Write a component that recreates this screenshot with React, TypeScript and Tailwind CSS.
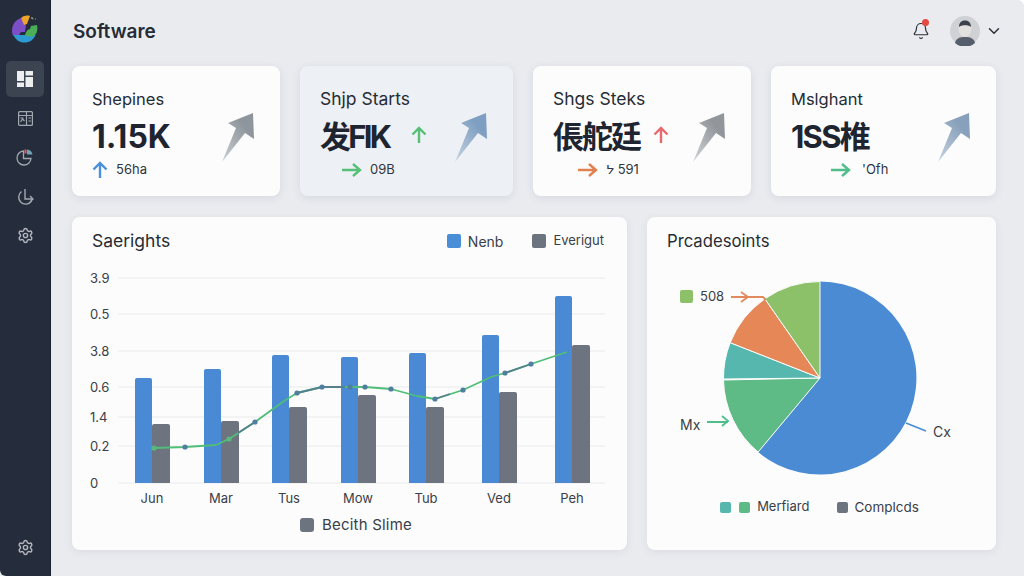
import { Bell, ChevronDown, Settings } from "lucide-react";

const cards = [
  { title: "Shepines", titleSize: "text-[16.5px]", value: "1.15K", valueClass: "text-[32px]", valueGap: "gap-[14px]", bg: "bg-[#fcfcfd]", w: "w-[208px]", from: "#8f959c", to: "#c9ced3", subPad: "pl-0", subGap: "gap-2", sub: "56ha", subColor: "#4a90dc", subDir: "up", mini: "" },
  { title: "Shjp Starts", titleSize: "text-[17.5px]", value: "发FIK", valueClass: "text-[31px] tracking-[-2.75px]", valueGap: "gap-[22px]", bg: "bg-[#edf0f4]", w: "w-[213px]", from: "#7f9fc2", to: "#c5d2e0", subPad: "pl-[22px]", subGap: "gap-2", sub: "09B", subColor: "#56bf78", subDir: "right", mini: "#56bf78" },
  { title: "Shgs Steks", titleSize: "text-[17.5px]", value: "倀舵廷", valueClass: "text-[31px] tracking-[-2px]", valueGap: "gap-[13px]", bg: "bg-[#fcfcfd]", w: "w-[218px]", from: "#92969b", to: "#d0d2d6", subPad: "pl-[25px]", subGap: "gap-2", sub: "ᔭ 591", subColor: "#e0814f", subDir: "right", mini: "#e86a6e" },
  { title: "Mslghant", titleSize: "text-[16.5px]", value: "1SS椎", valueClass: "text-[31px] tracking-[-1.75px]", valueGap: "gap-[14px]", bg: "bg-[#fcfcfd]", w: "w-[225px]", from: "#87a0bb", to: "#c6d2de", subPad: "pl-[40px]", subGap: "gap-[11px]", sub: "'Ofh", subColor: "#4fbe8a", subDir: "right", mini: "" },
];

const bars = [
  { label: "Jun", x: 135, blue: 378, grey: 424 },
  { label: "Mar", x: 204, blue: 369, grey: 421 },
  { label: "Tus", x: 272, blue: 355, grey: 407 },
  { label: "Mow", x: 341, blue: 357, grey: 395 },
  { label: "Tub", x: 409, blue: 353, grey: 407 },
  { label: "Ved", x: 482, blue: 335, grey: 392 },
  { label: "Peh", x: 555, blue: 296, grey: 345 },
];

const yAxis = [
  { label: "3.9", y: 278 },
  { label: "0.5", y: 314 },
  { label: "3.8", y: 351 },
  { label: "0.6", y: 387 },
  { label: "1.4", y: 417 },
  { label: "0.2", y: 446 },
  { label: "0", y: 483 },
];

const dots = [
  [154, 448], [185, 447], [229, 439], [255, 422], [297, 393], [322, 387], [350, 387], [365, 387], [391, 389], [435, 399], [463, 390], [505, 373], [531, 364],
];

function BigArrow({ id, from, to }: { id: string; from: string; to: string }) {
  return (
    <svg width="34" height="50" viewBox="0 0 34 50" className="shrink-0 mt-[47px]">
      <defs>
        <linearGradient id={id} x1="0.9" y1="0" x2="0.05" y2="1">
          <stop offset="0.25" stopColor={from} />
          <stop offset="1" stopColor={to} />
        </linearGradient>
      </defs>
      <path d="M32 0 L33 26 L24 20 L1 49 L15 15 L7 10 Z" fill={`url(#${id})`} />
    </svg>
  );
}

function SmallArrow({ color, dir }: { color: string; dir: string }) {
  if (dir === "up") {
    return (
      <svg width="16" height="17" viewBox="0 0 16 17" fill="none" stroke={color} strokeWidth="2.4" className="shrink-0">
        <path d="M8 17V2M1.5 8.5L8 2l6.5 6.5" />
      </svg>
    );
  }
  return (
    <svg width="20" height="16" viewBox="0 0 20 16" fill="none" stroke={color} strokeWidth="2.4" className="shrink-0">
      <path d="M0 8h18M11 2l7 6-7 6" />
    </svg>
  );
}

function Logo() {
  return (
    <svg width="26" height="28" viewBox="0 0 26 28">
      <path d="M9 3C3 5 0 10 0 16c0 2 .5 4 1.500 5H12l2-10z" fill="#7c4fc6" />
      <path d="M9 3c3-2.500 6-3 9-2l-3 8-3 1z" fill="#f0a32c" />
      <path d="M1.500 20c2 5 6 7.500 11 7.500 5 0 9-2.500 11-7.500z" fill="#2e9ad2" />
      <path d="M9 17h8l-2 3H7z" fill="#232c3c" />
      <path d="M13 20c1-4 3-6 5-6l1-3 6-1c1 4 0 8-2 10-3 2-7 2-10 0z" fill="#4bae56" />
      <path d="M19 2l2 .5.500 2-2-.5zM23 3l1 1-1 1z" fill="#8fa06a" />
    </svg>
  );
}

export default function App() {
  return (
    <div className="flex h-[576px] w-[1024px] overflow-hidden rounded-tr-[6px] bg-[#e9ebef] font-['Inter',sans-serif] text-[#20262f]">
      {/* Sidebar */}
      <aside className="flex w-[51px] shrink-0 flex-col items-center rounded-bl-[6px] border-r border-[#1a2130] bg-[#252d3c] pt-[15px] pb-[20px]">
        <Logo />
        <div className="mt-[18px] flex h-[36px] w-[38px] items-center justify-center rounded-[5px] bg-[#3c4451]">
          <svg width="16" height="16" viewBox="0 0 16 16" fill="#eceef0">
            <rect x="0" y="0" width="7" height="10" />
            <rect x="8.500" y="0" width="7.500" height="4.500" />
            <rect x="8.500" y="6" width="7.500" height="10" />
            <rect x="0" y="11.500" width="7" height="4.500" />
          </svg>
        </div>
        <svg width="15" height="15" viewBox="0 0 15 15" fill="none" stroke="#a2a8b0" strokeWidth="1.2" className="mt-[13.5px]">
          <rect x="0.600" y="0.600" width="13.800" height="13.800" rx="1" />
          <path d="M0.600 4.500h13.800M8.500 0.600v13.800M2.500 11l2-3 2 2M2.500 7h3M10.500 7h2.500M10.500 10h2.500" />
        </svg>
        <svg width="18" height="18" viewBox="0 0 18 18" fill="none" stroke="#a2a8b0" strokeWidth="1.300" className="mt-[22px]">
          <path d="M7.500 3a7 7 0 1 0 7.500 7.500H7.500z" />
          <path d="M9.500 1.500v4" stroke="#d8636a" strokeWidth="2" />
          <path d="M11 1.500a6 6 0 0 1 5.500 5H11z" fill="#6fa3b5" stroke="none" />
        </svg>
        <svg width="18" height="18" viewBox="0 0 18 18" fill="none" stroke="#a2a8b0" strokeWidth="1.400" className="mt-[22px]">
          <path d="M5.500 3.500a7 7 0 1 0 10 9.500" />
          <path d="M9 1v10h8M14 8l3 3-3 3" />
        </svg>
        <Settings size={17} color="#b4b8be" strokeWidth={2} className="mt-[21px]" />
        <Settings size={17} color="#b6b8bd" strokeWidth={2} className="mt-auto" />
      </aside>

      <main className="flex min-w-0 flex-1 flex-col pl-[21px] pr-[28px]">
        {/* Header */}
        <header className="flex h-[66px] shrink-0 items-center justify-between pb-[5px]">
          <h1 className="ml-px mt-[3px] text-[19px] font-semibold text-[#262c35]">Software</h1>
          <div className="mr-[-7px] flex items-center">
            <div className="relative">
              <Bell size={18} color="#2a3038" strokeWidth={1.6} />
              <span className="absolute right-[1px] top-[-3px] h-[7px] w-[7px] rounded-full bg-[#e5493f]" />
            </div>
            <svg width="30" height="30" viewBox="0 0 30 30" className="ml-[20px]">
              <circle cx="15" cy="15" r="15" fill="#cfd1d5" />
              <ellipse cx="15" cy="13" rx="6.500" ry="8" fill="#e3e1e0" />
              <path d="M9 11c0-5 3-6.500 6-6.500s6 1.500 6 6.500c-2-2.500-10-2.500-12 0z" fill="#3b424c" />
              <path d="M5 27c1-5 5-6 10-6s9 1 10 6a15 15 0 0 1-20 0z" fill="#555e6a" />
            </svg>
            <ChevronDown size={18} color="#2a3038" strokeWidth={2} className="ml-[5px]" />
          </div>
        </header>

        {/* Stat cards */}
        <section className="flex h-[130px] shrink-0 gap-5">
          {cards.map((c, i) => (
            <div key={c.title} className={`flex justify-between rounded-[8px] pl-5 pr-[25px] shadow-[0_2px_8px_rgba(60,70,90,0.1)] ${c.bg} ${c.w}`}>
              <div>
                <div className={`mt-[23px] whitespace-nowrap leading-[20px] text-[#262c35] ${c.titleSize}`}>{c.title}</div>
                <div className={`mt-[10px] flex h-[36px] items-start ${c.valueGap}`}>
                  <span className={`whitespace-nowrap font-['Inter','Noto_Sans_CJK_SC',sans-serif] font-bold leading-[36px] text-[#1f2530] ${c.valueClass}`}>{c.value}</span>
                  {c.mini && (
                    <span className="mt-[7px]">
                      <SmallArrow color={c.mini} dir="up" />
                    </span>
                  )}
                </div>
                <div className={`mt-[5px] flex items-center text-[13px] text-[#30363f] ${c.subPad} ${c.subGap}`}>
                  <SmallArrow color={c.subColor} dir={c.subDir} />
                  <span>{c.sub}</span>
                </div>
              </div>
              <BigArrow id={`arrow-${i}`} from={c.from} to={c.to} />
            </div>
          ))}
        </section>

        {/* Charts */}
        <section className="mt-[21px] flex h-[333px] shrink-0 gap-5">
          <div className="flex w-[555px] flex-col rounded-[8px] bg-[#fcfcfc] shadow-[0_2px_8px_rgba(60,70,90,0.08)]">
            <div className="flex h-[45px] shrink-0 items-center justify-between pl-5 pr-[23px] pt-[3px]">
              <h2 className="text-[17.500px] text-[#262c35]">Saerights</h2>
              <div className="flex items-center text-[13px] text-[#3a4048]">
                <span className="h-[14px] w-[14px] rounded-[2px] bg-[#4a8ed8]" />
                <span className="ml-[7px] text-[14px]">Nenb</span>
                <span className="ml-[29px] h-[14px] w-[14px] rounded-[2px] bg-[#6c7480]" />
                <span className="ml-[7px]">Everigut</span>
              </div>
            </div>
            <svg width="555" height="248" viewBox="72 262 555 248" className="block shrink-0">
              {yAxis.map((t) => (
                <g key={t.y}>
                  <line x1="118" x2="605" y1={t.y} y2={t.y} stroke="#e9eaec" strokeWidth="1" />
                  <text x="90" y={t.y + 5} fontSize="13" fill="#3a4048">{t.label}</text>
                </g>
              ))}
              {bars.map((b) => (
                <g key={b.label}>
                  <path d={`M${b.x} 483V${b.blue + 2}q0-2 2-2h13q2 0 2 2V483z`} fill="#4a89d3" />
                  <path d={`M${b.x + 17} 483V${b.grey + 2}q0-2 2-2h14q2 0 2 2V483z`} fill="#6d7480" />
                  <text x={b.x + 17} y="503" textAnchor="middle" fontSize="13" fill="#3a4048">{b.label}</text>
                </g>
              ))}
              <polyline
                points="154,448 185,447 216,445 229,439 255,422 284,401 297,393 322,387 350,387 365,387 391,389 417,396 435,399 463,390 491,377 505,373 531,364 567,352"
                fill="none"
                stroke="#4fbe78"
                strokeWidth="1.800"
                strokeLinejoin="round"
              />
              <path d="M238 433L255 422M297 393L322 387L345 387M435 399L450 394M505 373L531 364" fill="none" stroke="#55808f" strokeWidth="1.800" />
              {dots.map(([x, y]) => (
                <circle key={x} cx={x} cy={y} r="2.600" fill={x === 154 || x === 229 ? "#58b97f" : "#4f7f9f"} />
              ))}
            </svg>
            <div className="mt-[4px] flex items-center justify-center gap-2 pl-[13px] text-[15px] tracking-[0.2px] text-[#3a4048]">
              <span className="h-[14px] w-[14px] rounded-[3px] bg-[#6c7480]" />
              <span>Becith Slime</span>
            </div>
          </div>

          <div className="flex w-[349px] flex-col rounded-[8px] bg-[#fcfcfc] shadow-[0_2px_8px_rgba(60,70,90,0.08)]">
            <div className="flex h-[45px] shrink-0 items-center pl-5 pt-[5px]">
              <h2 className="text-[16.700px] text-[#262c35]">Prcadesoints</h2>
            </div>
            <svg width="349" height="225" viewBox="647 262 349 225" className="block shrink-0">
              <path d="M820 378V281.500A96.500 96.500 0 1 1 758.100 452.100z" fill="#4a8bd4" />
              <path d="M820 378L758.100 452.100A96.500 96.500 0 0 1 723.500 380z" fill="#5fbb86" stroke="#fcfcfc" strokeWidth="1" />
              <path d="M820 378L723.500 379A96.500 96.500 0 0 1 730.200 342.700z" fill="#55b7ae" stroke="#fcfcfc" strokeWidth="1" />
              <path d="M820 378L730.200 342.700A96.500 96.500 0 0 1 764.900 298.800z" fill="#e58757" stroke="#fcfcfc" strokeWidth="1" />
              <path d="M820 378L764.900 298.800A96.500 96.500 0 0 1 820 281.500z" fill="#8cc069" stroke="#fcfcfc" strokeWidth="1" />
              <rect x="680" y="290" width="13" height="13" rx="2" fill="#8cc069" />
              <text x="700" y="301" fontSize="13" fill="#3a4048">508</text>
              <path d="M731 297h32l3 3M741 292l7 5-7 5" fill="none" stroke="#e28a5c" strokeWidth="1.800" />
              <text x="680" y="430" fontSize="14" fill="#3a4048">Mx</text>
              <path d="M707 422h21M722 416l6 5-6 5" fill="none" stroke="#4fbe8a" strokeWidth="1.800" />
              <path d="M906 423l20 8" fill="none" stroke="#4a8bd4" strokeWidth="1.800" />
              <text x="933" y="437" fontSize="14" fill="#3a4048">Cx</text>
            </svg>
            <div className="mt-[10px] flex items-center justify-center pr-[4px] text-[13px] text-[#3a4048]">
              <span className="h-[11px] w-[11px] rounded-[2px] bg-[#55b7ae]" />
              <span className="ml-2 h-[11px] w-[11px] rounded-[2px] bg-[#5fbb86]" />
              <span className="ml-[7px]">Merfiard</span>
              <span className="ml-7 h-[11px] w-[11px] rounded-[2px] bg-[#6c7480]" />
              <span className="ml-[6px] text-[13.500px]">Complcds</span>
            </div>
          </div>
        </section>
      </main>
    </div>
  );
}
